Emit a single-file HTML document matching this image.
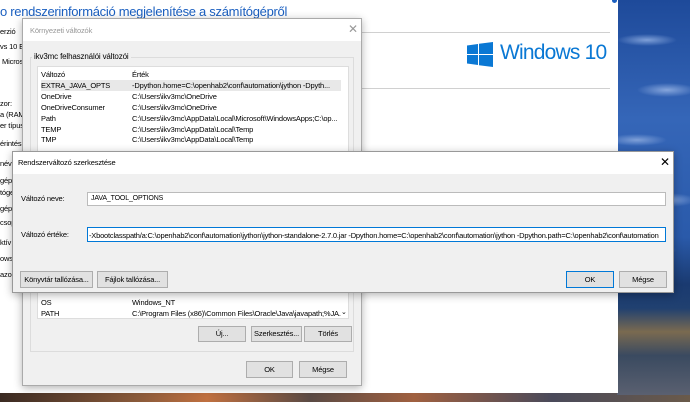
<!DOCTYPE html>
<html><head><meta charset="utf-8"><style>
*{margin:0;padding:0;box-sizing:border-box}
body{width:690px;height:402px;overflow:hidden;position:relative;font-family:"Liberation Sans",sans-serif;font-size:7.5px;color:#000;letter-spacing:-.15px;
background:linear-gradient(90deg,#3a2a22,#8a5a3a 20%,#c07040 30%,#5a4a44 45%,#a06040 60%,#4a4a5a 80%,#6a5a4a)}
.abs{position:absolute}
.wall{left:617px;top:0;width:73px;height:395px;background:
radial-gradient(ellipse 30px 6px at 30px 40px,#7fa0d8,transparent),
radial-gradient(ellipse 30px 7px at 50px 90px,#86a6dc,transparent),
radial-gradient(ellipse 30px 6px at 20px 140px,#7fa0d8,transparent),
radial-gradient(ellipse 30px 7px at 50px 200px,#7fa0d8,transparent),
radial-gradient(ellipse 30px 6px at 30px 250px,#6f90c8,transparent),
linear-gradient(180deg,#1e4a9a 0%,#3566b8 30%,#2a5aaa 60%,#1a3a70 72%,#204070 78%,#7a6a50 84%,#3a4a60 90%,#5a6070 100%)}
.main{left:0;top:0;width:618px;height:393px;background:#fff}
.t{position:absolute;white-space:nowrap}
.dlg{position:absolute;background:#f0f0f0;border:1px solid #aaa;box-shadow:0 2px 8px rgba(0,0,0,.3)}
.btn{position:absolute;background:#e1e1e1;border:1px solid #adadad;text-align:center;font-size:7.5px;line-height:14px;white-space:nowrap;overflow:hidden}
.row{position:absolute;left:3px;height:11px;line-height:11px;width:300px;white-space:nowrap;overflow:hidden}
.row span{position:absolute;left:91px}
</style></head><body>
<div class="abs wall"></div>
<div class="abs main">
 <div class="t" style="left:0;top:4px;font-size:13px;color:#1a5fc0;letter-spacing:-.3px">o rendszerinformáció megjelenítése a számítógépről</div>
 <div class="abs" style="left:362px;top:32px;width:248px;height:1px;background:#d0d0d0"></div>
 <div class="abs" style="left:362px;top:88px;width:248px;height:1px;background:#d0d0d0"></div>
 <svg class="abs" style="left:467px;top:42px" width="27" height="26" viewBox="0 0 27 26"><path fill="#0a78d4" d="M0 3.5L11 2V12H0ZM12 1.8L26 0V12H12ZM0 13H11V23L0 21.5ZM12 13H26V25L12 23.2Z"/></svg>
 <div class="t" style="left:500px;top:41px;font-size:21px;color:#0a78d4;letter-spacing:-.8px">Windows 10</div>
 <div class="abs" style="left:612px;top:0;width:5px;height:3px;border-radius:0 0 3px 3px;background:#1a5fc0"></div>
 <div class="t" style="left:0;top:27px">erzió</div>
 <div class="t" style="left:0;top:42px">vs 10 Er</div>
 <div class="t" style="left:2px;top:57px">Micros</div>
 <div class="t" style="left:0;top:99px">zor:</div>
 <div class="t" style="left:0;top:110px">a (RAM</div>
 <div class="t" style="left:0;top:121px">er típus</div>
 <div class="t" style="left:0;top:139px">érintés:</div>
 <div class="t" style="left:0;top:159px">névi</div>
 <div class="t" style="left:0;top:176px">gép</div>
 <div class="t" style="left:0;top:188px">tóge</div>
 <div class="t" style="left:0;top:204px">gép</div>
 <div class="t" style="left:0;top:218px">csop</div>
 <div class="t" style="left:0;top:238px">ktív</div>
 <div class="t" style="left:0;top:254px">ows</div>
 <div class="t" style="left:0;top:270px">azo</div>
</div>

<div class="dlg" style="left:22px;top:18px;width:340px;height:368px">
 <div class="abs" style="left:0;top:0;width:338px;height:22px;background:#fff"></div>
 <div class="t" style="left:7px;top:7px;color:#999">Környezeti változók</div>
 <div class="t" style="left:325px;top:3px;font-size:12px;color:#999">✕</div>
 <div class="abs" style="left:7px;top:38px;width:324px;height:295px;border:1px solid #dcdcdc"></div>
 <div class="t" style="left:9px;top:33px;background:#f0f0f0;padding:0 2px;font-size:8px">ikv3mc felhasználói változói</div>
 <div class="abs" style="left:14px;top:47px;width:312px;height:100px;background:#fff;border:1px solid #ddd">
  <div class="row" style="top:2px">Változó<span>Érték</span></div>
  <div class="row" style="top:13px;background:#e8e8e8;width:300px">EXTRA_JAVA_OPTS<span>-Dpython.home=C:\openhab2\conf\automation\jython -Dpyth...</span></div>
  <div class="row" style="top:24px">OneDrive<span>C:\Users\ikv3mc\OneDrive</span></div>
  <div class="row" style="top:35px">OneDriveConsumer<span>C:\Users\ikv3mc\OneDrive</span></div>
  <div class="row" style="top:46px">Path<span>C:\Users\ikv3mc\AppData\Local\Microsoft\WindowsApps;C:\op...</span></div>
  <div class="row" style="top:57px">TEMP<span>C:\Users\ikv3mc\AppData\Local\Temp</span></div>
  <div class="row" style="top:67px">TMP<span>C:\Users\ikv3mc\AppData\Local\Temp</span></div>
 </div>
 <div class="abs" style="left:14px;top:270px;width:312px;height:30px;background:#fff;border:1px solid #ddd">
  <div class="row" style="top:7px">OS<span>Windows_NT</span></div>
  <div class="row" style="top:18px">PATH<span>C:\Program Files (x86)\Common Files\Oracle\Java\javapath;%JA...</span></div>
  <div class="t" style="left:303px;top:18px;font-size:7px">⌄</div>
 </div>
 <div class="btn" style="left:175px;top:307px;width:48px;height:16px">Új...</div>
 <div class="btn" style="left:228px;top:307px;width:51px;height:16px">Szerkesztés...</div>
 <div class="btn" style="left:281px;top:307px;width:48px;height:16px">Törlés</div>
 <div class="btn" style="left:223px;top:342px;width:47px;height:17px;line-height:15px">OK</div>
 <div class="btn" style="left:276px;top:342px;width:48px;height:17px;line-height:15px">Mégse</div>
</div>

<div class="dlg" style="left:12px;top:151px;width:662px;height:142px;border-color:#999">
 <div class="abs" style="left:0;top:0;width:660px;height:22px;background:#fff"></div>
 <div class="t" style="left:5px;top:6px">Rendszerváltozó szerkesztése</div>
 <div class="t" style="left:647px;top:3px;font-size:12px">✕</div>
 <div class="t" style="left:8px;top:42px">Változó neve:</div>
 <div class="abs" style="left:74px;top:40px;width:579px;height:14px;background:#fff;border:1px solid #bbb"></div>
 <div class="t" style="left:78px;top:43px;font-size:7px">JAVA_TOOL_OPTIONS</div>
 <div class="t" style="left:8px;top:78px">Változó értéke:</div>
 <div class="abs" style="left:74px;top:75px;width:579px;height:15px;background:#fff;border:1px solid #0078d7;overflow:hidden">
  <div class="t" style="left:1px;top:3px;font-size:7.5px;letter-spacing:-.2px">-Xbootclasspath/a:C:\openhab2\conf\automation\jython\jython-standalone-2.7.0.jar -Dpython.home=C:\openhab2\conf\automation\jython -Dpython.path=C:\openhab2\conf\automation</div>
 </div>
 <div class="btn" style="left:7px;top:119px;width:73px;height:17px;line-height:15px">Könyvtár tallózása...</div>
 <div class="btn" style="left:84px;top:119px;width:71px;height:17px;line-height:15px">Fájlok tallózása...</div>
 <div class="btn" style="left:553px;top:119px;width:48px;height:17px;line-height:15px;border-color:#0078d7">OK</div>
 <div class="btn" style="left:606px;top:119px;width:48px;height:17px;line-height:15px">Mégse</div>
</div>
</body></html>
